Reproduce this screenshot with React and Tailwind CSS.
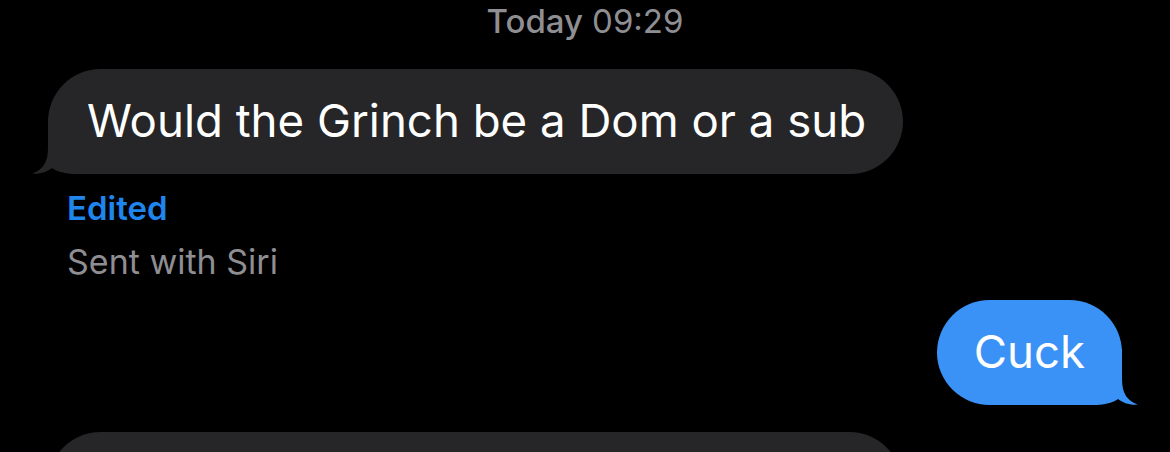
function Tail({ color, flip }) {
  return (
    <svg
      width="72"
      height="56"
      viewBox="0 0 72 56"
      className={
        flip
          ? 'absolute right-[-17px] bottom-0 -scale-x-100'
          : 'absolute left-[-17px] bottom-0'
      }
    >
      <path
        d="M17 0 L17 30 C17 44 12 52 1 55.6 C9 56.4 16 54 21 50 C27 54 35 56 47 56 L72 56 L72 0 Z"
        fill={color}
      />
    </svg>
  );
}

export default function App() {
  return (
    <div
      className="w-[1170px] h-[452px] bg-black overflow-hidden"
      style={{ fontFamily: 'Inter, "Noto Sans", sans-serif' }}
    >
      <div className="h-[44px] flex items-center justify-center text-[33px] text-[#8e8e93]">
        <span className="font-medium">Today</span>
        <span className="ml-[9px]">09:29</span>
      </div>

      <div className="mt-[25px] pl-[48px] flex">
        <div className="relative h-[105px] rounded-[53px] bg-[#262628] flex items-center pl-[39px] pr-[37px]">
          <Tail color="#262628" />
          <span className="relative text-[45.6px] text-white">
            Would the Grinch be a Dom or a sub
          </span>
        </div>
      </div>

      <div className="pl-[67px] mt-[14px] text-[33px] leading-[40px] font-semibold text-[#1f86ee]">
        Edited
      </div>
      <div className="pl-[67px] mt-[14px] text-[34px] leading-[40px] text-[#8e8e93]">
        Sent with Siri
      </div>

      <div className="mt-[18px] pr-[48px] flex justify-end">
        <div className="relative h-[105px] rounded-[53px] bg-[#3a92f6] flex items-center pl-[37px] pr-[37px]">
          <Tail color="#3a92f6" flip />
          <span className="relative text-[45.6px] text-white">Cuck</span>
        </div>
      </div>

      <div className="mt-[27px] pl-[48px] flex">
        <div className="w-[854px] h-[105px] rounded-[53px] bg-[#262628]" />
      </div>
    </div>
  );
}
